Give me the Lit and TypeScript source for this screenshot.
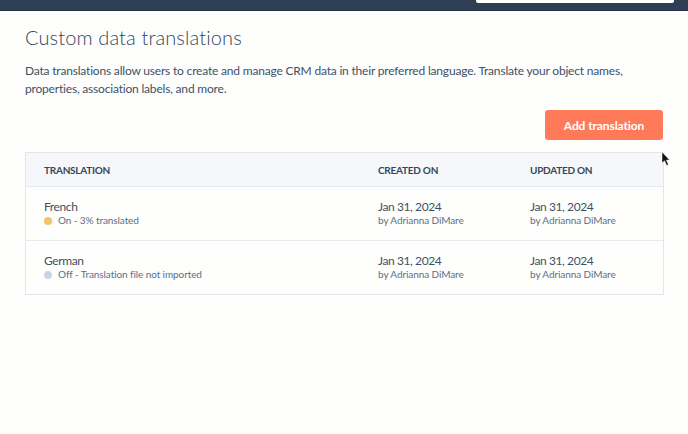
import { LitElement, html, css } from "lit";
import { customElement } from "lit/decorators.js";

const rows = [
  { name: "French", status: "On - 3% translated", dot: "on" },
  { name: "German", status: "Off - Translation file not imported", dot: "off" },
];

@customElement("app-root")
export class AppRoot extends LitElement {
  static styles = css`
    :host {
      display: block;
      position: relative;
      width: 688px;
      height: 434px;
      overflow: hidden;
      background: #fefefd;
      font-family: Lato, "Liberation Sans", sans-serif;
      color: #33475b;
    }
    .nav {
      height: 11px;
      background: #2e3f53;
      border-bottom: 1px solid #26364a;
      box-sizing: border-box;
      display: flex;
      justify-content: flex-end;
      padding-right: 14px;
    }
    .search {
      width: 198px;
      height: 3px;
      background: #fff;
      border-radius: 0 0 2px 2px;
    }
    .page {
      padding: 14px 25px 0;
    }
    h1 {
      margin: 0;
      font-size: 20px;
      line-height: 24px;
      font-weight: 300;
      letter-spacing: 0.13px;
      color: #33475b;
    }
    .desc {
      margin: 13px 0 0;
      font-size: 12px;
      line-height: 18px;
      letter-spacing: -0.19px;
      color: #3d5166;
      width: 630px;
    }
    .actions {
      display: flex;
      justify-content: flex-end;
      margin-top: 12px;
    }
    .btn {
      width: 118px;
      height: 30px;
      box-sizing: border-box;
      border: none;
      border-radius: 3px;
      background: #ff7a59;
      color: #fff;
      font: 700 12px Lato, "Liberation Sans", sans-serif;
      letter-spacing: -0.1px;
      padding: 0;
    }
    .table {
      margin-top: 12px;
      width: 639px;
      box-sizing: border-box;
      border: 1px solid #e1e5ec;
    }
    .row {
      display: grid;
      grid-template-columns: 334px 152px 1fr;
      padding-left: 18px;
      align-items: center;
      height: 54px;
      border-top: 1px solid #e6e9f0;
      box-sizing: border-box;
    }
    .head {
      height: 33px;
      border-top: none;
      background: #f5f7fa;
      font-size: 10px;
      font-weight: 700;
      letter-spacing: -0.25px;
      color: #33475b;
    }
    .main {
      font-size: 12px;
      line-height: 14px;
      letter-spacing: -0.4px;
      color: #3d5166;
    }
    .sub {
      font-size: 10px;
      line-height: 13px;
      letter-spacing: -0.09px;
      color: #5a7087;
    }
    .status {
      display: flex;
      align-items: center;
      gap: 6px;
    }
    .dot {
      width: 8px;
      height: 8px;
      border-radius: 50%;
    }
    .dot.on { background: #f5c26b; }
    .dot.off { background: #cbd6e2; }
    .cursor {
      position: absolute;
      left: 661px;
      top: 152px;
      width: 10px;
      height: 15px;
    }
  `;

  private cell(main: unknown, sub: unknown) {
    return html`<div><div class="main">${main}</div><div class="sub">${sub}</div></div>`;
  }

  render() {
    return html`
      <div class="nav"><div class="search"></div></div>
      <div class="page">
        <h1>Custom data translations</h1>
        <p class="desc">
          Data translations allow users to create and manage CRM data in their preferred language. Translate your object names, properties, association labels, and more.
        </p>
        <div class="actions"><button class="btn">Add translation</button></div>
        <div class="table">
          <div class="row head">
            <div>TRANSLATION</div><div>CREATED ON</div><div>UPDATED ON</div>
          </div>
          ${rows.map(
            (r) => html`
              <div class="row">
                ${this.cell(
                  r.name,
                  html`<span class="status"><span class="dot ${r.dot}"></span>${r.status}</span>`
                )}
                ${this.cell("Jan 31, 2024", "by Adrianna DiMare")}
                ${this.cell("Jan 31, 2024", "by Adrianna DiMare")}
              </div>
            `
          )}
        </div>
      </div>
      <svg class="cursor" viewBox="0 0 10 15">
        <path d="M1 0 L1 11 L3.6 8.8 L5.6 13.4 L7.4 12.6 L5.4 8 L8.6 8 Z" fill="#111" stroke="#fff" stroke-width="0.5"/>
      </svg>
    `;
  }
}
